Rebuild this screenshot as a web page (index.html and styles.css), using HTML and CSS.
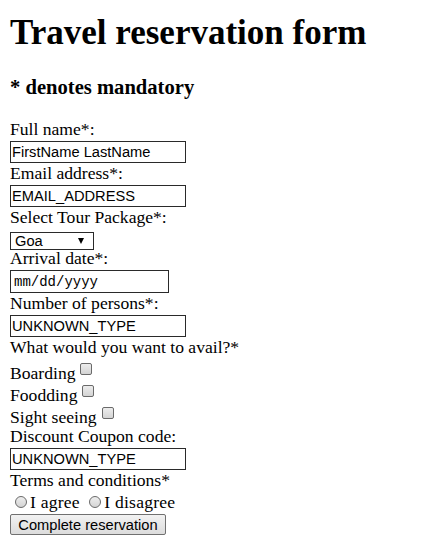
FILE: index.html
```html
<!DOCTYPE html>
<html>
<head>
<meta charset="utf-8">
<title>Travel reservation form</title>
<link rel="stylesheet" href="styles.css">
</head>
<body>
<h1 class="title">Travel reservation form</h1>
<h3 class="note">* denotes mandatory</h3>
<form class="form">
  <div class="lbl">Full name*:</div>
  <div class="field"><input class="text" type="text" value="FirstName LastName"></div>
  <div class="lbl">Email address*:</div>
  <div class="field"><input class="text" type="text" value="EMAIL_ADDRESS"></div>
  <div class="lbl">Select Tour Package*:</div>
  <div class="field field-select"><span class="select-wrap"><select class="select"><option>Goa</option></select></span></div>
  <div class="lbl">Arrival date*:</div>
  <div class="field field-date"><input class="date" type="text" value="mm/dd/yyyy"></div>
  <div class="lbl">Number of persons*:</div>
  <div class="field"><input class="text" type="text" value="UNKNOWN_TYPE"></div>
  <div class="lbl">What would you want to avail?*</div>
  <div class="opts">
    <div class="opt">Boarding<input class="check" type="checkbox"></div>
    <div class="opt">Foodding<input class="check" type="checkbox"></div>
    <div class="opt">Sight seeing<input class="check" type="checkbox"></div>
  </div>
  <div class="lbl">Discount Coupon code:</div>
  <div class="field"><input class="text" type="text" value="UNKNOWN_TYPE"></div>
  <div class="lbl">Terms and conditions*</div>
  <div class="opt opt-radio"><input class="radio" type="radio" name="terms">I agree <input class="radio" type="radio" name="terms">I disagree</div>
  <div class="field field-btn"><button class="btn" type="button">Complete reservation</button></div>
</form>
</body>
</html>
```
FILE: styles.css
```css
html, body {
  margin: 0;
  background: #fff;
}
body {
  padding: 0 10px;
  font-family: "Liberation Serif", "Times New Roman", serif;
  font-size: 17.6px;
  color: #000;
}
.title {
  margin: 13px 0 0;
  font-size: 35px;
  line-height: 40px;
  font-weight: bold;
}
.note {
  margin: 22px 0 20px;
  font-size: 20.6px;
  line-height: 24px;
  font-weight: bold;
}
.form {
  margin: 0;
}
.lbl {
  line-height: 21px;
  height: 21px;
  white-space: nowrap;
}
.field {
  margin-top: 1px;
  height: 22px;
}
.text {
  display: block;
  box-sizing: border-box;
  width: 176px;
  height: 22px;
  margin: 0;
  padding: 0 1px;
  border: 1px solid #2a2a2a;
  font-family: "Liberation Sans", Arial, sans-serif;
  font-size: 14.67px;
  color: #000;
  background: #fff;
  outline: none;
}
.field-select {
  margin-top: 2px;
  height: 18px;
}
.select-wrap {
  position: relative;
  display: inline-block;
}
.select-wrap::after {
  content: "";
  position: absolute;
  left: 68px;
  top: 6px;
  width: 0;
  height: 0;
  border-left: 3.5px solid transparent;
  border-right: 3.5px solid transparent;
  border-top: 6px solid #000;
  pointer-events: none;
}
.select {
  display: block;
  -webkit-appearance: none;
  appearance: none;
  box-sizing: border-box;
  width: 84px;
  height: 18px;
  margin: 0;
  padding: 0 0 0 4px;
  border: 1px solid #2a2a2a;
  border-radius: 0;
  background: #fff;
  font-family: "Liberation Sans", Arial, sans-serif;
  font-size: 14.67px;
  line-height: 16px;
  color: #000;
  outline: none;
}
.field-date {
  height: 23px;
}
.date {
  display: block;
  box-sizing: border-box;
  width: 159px;
  height: 23px;
  margin: 0;
  padding: 0 3px;
  border: 1px solid #2a2a2a;
  font-family: "Liberation Mono", "Courier New", monospace;
  font-size: 14px;
  color: #000;
  background: #fff;
  outline: none;
}
.opts {
  margin-top: 2px;
}
.opt {
  height: 22px;
  line-height: 22px;
  white-space: nowrap;
}
.opt-radio {
  letter-spacing: 0.2px;
}
.check {
  -webkit-appearance: none;
  appearance: none;
  box-sizing: border-box;
  width: 12px;
  height: 12px;
  margin: 3px 3px 4px 5px;
  vertical-align: baseline;
  border: 1px solid #6a6a6a;
  border-radius: 2px;
  background: linear-gradient(#ededed, #d4d4d4);
}
.radio {
  -webkit-appearance: none;
  appearance: none;
  box-sizing: border-box;
  width: 12px;
  height: 12px;
  margin: 3px 3px 0 5px;
  vertical-align: baseline;
  border: 1px solid #6a6a6a;
  border-radius: 50%;
  background: linear-gradient(#ededed, #d4d4d4);
}
.field-btn {
  height: 21px;
}
.btn {
  display: block;
  box-sizing: border-box;
  width: 156px;
  height: 21px;
  margin: 0;
  padding: 0 6px;
  border: 1px solid #707070;
  border-radius: 2px;
  background: linear-gradient(#f2f2f2, #dcdcdc);
  font-family: "Liberation Sans", Arial, sans-serif;
  font-size: 14.67px;
  color: #000;
  white-space: nowrap;
}
```
